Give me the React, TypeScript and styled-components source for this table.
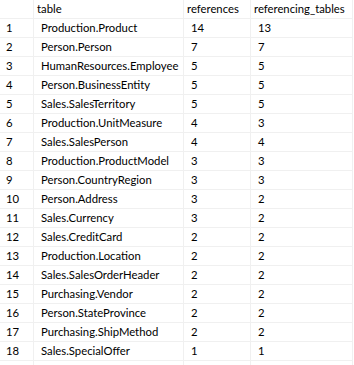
import React from "react";
import styled, { createGlobalStyle } from "styled-components";

const GlobalStyle = createGlobalStyle`
  html, body {
    margin: 0;
    padding: 0;
    background: #ffffff;
  }
`;

const Grid = styled.div`
  display: grid;
  grid-template-columns: 34px 150px 67px 102px;
  grid-auto-rows: 19px;
  font-family: Lato, "Liberation Sans", Arial, sans-serif;
  font-size: 11.3px;
  color: #000;
  width: 353px;
`;

const Cell = styled.div<{ $head?: boolean }>`
  box-sizing: border-box;
  border-right: 1px solid #f0f0f0;
  border-bottom: 1px solid #f0f0f0;
  padding-left: ${(p) => (p.$head ? "3px" : "7px")};
  display: flex;
  align-items: center;
  white-space: nowrap;
  overflow: hidden;
  line-height: 1;
`;

const RowNum = styled(Cell)`
  padding-left: 6px;
`;

const rows: [string, number, number][] = [
  ["Production.Product", 14, 13],
  ["Person.Person", 7, 7],
  ["HumanResources.Employee", 5, 5],
  ["Person.BusinessEntity", 5, 5],
  ["Sales.SalesTerritory", 5, 5],
  ["Production.UnitMeasure", 4, 3],
  ["Sales.SalesPerson", 4, 4],
  ["Production.ProductModel", 3, 3],
  ["Person.CountryRegion", 3, 3],
  ["Person.Address", 3, 2],
  ["Sales.Currency", 3, 2],
  ["Sales.CreditCard", 2, 2],
  ["Production.Location", 2, 2],
  ["Sales.SalesOrderHeader", 2, 2],
  ["Purchasing.Vendor", 2, 2],
  ["Person.StateProvince", 2, 2],
  ["Purchasing.ShipMethod", 2, 2],
  ["Sales.SpecialOffer", 1, 1],
];

const App: React.FC = () => {
  return (
    <>
      <GlobalStyle />
      <Grid>
        <RowNum $head />
        <Cell $head>table</Cell>
        <Cell $head>references</Cell>
        <Cell $head>referencing_tables</Cell>
        {rows.map(([name, refs, refTables], i) => (
          <React.Fragment key={name}>
            <RowNum>{i + 1}</RowNum>
            <Cell>{name}</Cell>
            <Cell>{refs}</Cell>
            <Cell>{refTables}</Cell>
          </React.Fragment>
        ))}
        <RowNum />
        <Cell />
        <Cell />
        <Cell />
      </Grid>
    </>
  );
};

export default App;
